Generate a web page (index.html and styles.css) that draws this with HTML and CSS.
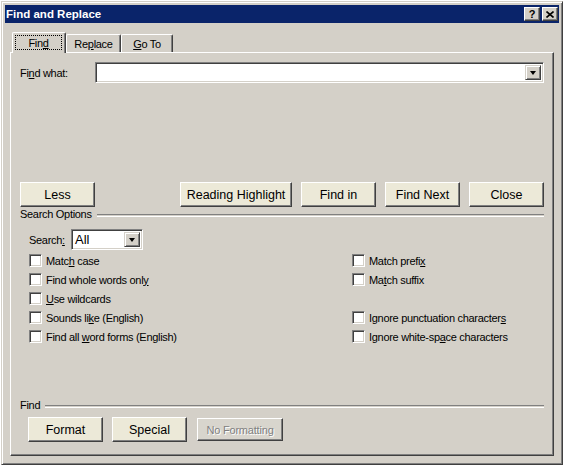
FILE: index.html
```html
<!DOCTYPE html>
<html>
<head>
<meta charset="utf-8">
<link rel="stylesheet" href="styles.css">
</head>
<body>
<div class="window">
  <div class="titlebar">
    <span class="title">Find and Replace</span>
    <div class="tbtns">
      <span class="tbtn help">?</span>
      <span class="tbtn close"><svg width="8" height="7" viewBox="0 0 8 7"><path d="M0.5 0.5 L7.5 6.5 M7.5 0.5 L0.5 6.5" stroke="#000" stroke-width="1.6" fill="none"/></svg></span>
    </div>
  </div>
  <div class="client">
    <div class="tabs">
      <div class="tab active"><span class="focus">Fin<u>d</u></span></div>
      <div class="tab t2">Re<u>p</u>lace</div>
      <div class="tab t3"><u>G</u>o To</div>
    </div>
    <div class="panel">
      <div class="findrow">
        <span class="lbl findlbl">Fi<u>n</u>d what:</span>
        <div class="combo wide">
          <div class="field"></div>
          <div class="dd"><span class="arrow"></span></div>
        </div>
      </div>
      <div class="btnrow">
        <div class="btn">Less</div>
        <div class="btn rh">Reading Highlight</div>
        <div class="btn">Find in</div>
        <div class="btn">Find Next</div>
        <div class="btn">Close</div>
      </div>
      <div class="grouphead first"><span class="lbl">Search Options</span><span class="etch"></span></div>
      <div class="searchrow">
        <span class="lbl searchlbl">Search<u>:</u></span>
        <div class="combo small">
          <div class="field val">All</div>
          <div class="dd"><span class="arrow"></span></div>
        </div>
      </div>
      <div class="opts">
        <div class="chk"><span class="box"></span><span class="lbl">Matc<u>h</u> case</span></div>
        <div class="chk"><span class="box"></span><span class="lbl">Match prefi<u>x</u></span></div>
        <div class="chk"><span class="box"></span><span class="lbl">Find whole words onl<u>y</u></span></div>
        <div class="chk"><span class="box"></span><span class="lbl">Ma<u>t</u>ch suffix</span></div>
        <div class="chk"><span class="box"></span><span class="lbl"><u>U</u>se wildcards</span></div>
        <div class="chk"></div>
        <div class="chk"><span class="box"></span><span class="lbl">Sounds li<u>k</u>e (English)</span></div>
        <div class="chk"><span class="box"></span><span class="lbl">Ignore punctuation character<u>s</u></span></div>
        <div class="chk"><span class="box"></span><span class="lbl">Find all <u>w</u>ord forms (English)</span></div>
        <div class="chk"><span class="box"></span><span class="lbl">Ignore white-sp<u>a</u>ce characters</span></div>
      </div>
      <div class="grouphead second"><span class="lbl">Find</span><span class="etch"></span></div>
      <div class="btnrow2">
        <div class="btn">Format</div>
        <div class="btn sp">Special</div>
        <div class="btn disabled">No Formatting</div>
      </div>
    </div>
  </div>
</div>
</body>
</html>
```

FILE: styles.css
```css
html, body {
  margin: 0;
  background: #fff;
}
body {
  padding: 1px 0 0 1px;
  font-family: "Liberation Sans", Arial, sans-serif;
  font-size: 11px;
  color: #000;
}
u { text-decoration: underline; text-underline-offset: 1px; }

.window {
  width: 562px;
  height: 464px;
  box-sizing: border-box;
  background: #d4d0c8;
  border: 1px solid;
  border-color: #d4d0c8 #404040 #404040 #d4d0c8;
  box-shadow: inset 1px 1px #fff, inset -1px -1px #808080;
  padding: 3px;
  display: flex;
  flex-direction: column;
}

.titlebar {
  height: 18px;
  flex: none;
  background: #0a246a;
  display: flex;
  align-items: center;
  padding-left: 1px;
}
.title {
  color: #fff;
  font-weight: bold;
  font-size: 11.5px;
  flex: 1;
}
.tbtns {
  display: flex;
  gap: 2px;
  margin-right: 1px;
}
.tbtn {
  width: 16px;
  height: 14px;
  box-sizing: border-box;
  background: #d4d0c8;
  border: 1px solid;
  border-color: #fff #404040 #404040 #fff;
  box-shadow: inset -1px -1px #808080;
  display: flex;
  align-items: center;
  justify-content: center;
}
.help {
  font-weight: bold;
  font-size: 11px;
  line-height: 12px;
}
.close svg { display: block; }

.client {
  flex: 1;
  padding: 9px 5px 0 5px;
}

.tabs {
  display: flex;
  align-items: flex-end;
  height: 20px;
  margin-left: 2px;
  position: relative;
  z-index: 1;
}
.tab {
  box-sizing: border-box;
  height: 18px;
  border-top: 1px solid #fff;
  border-left: 1px solid #fff;
  border-right: 1px solid #404040;
  box-shadow: inset -1px 0 #808080;
  border-radius: 2px 2px 0 0;
  display: flex;
  align-items: center;
  justify-content: center;
  letter-spacing: -0.3px;
  background: #d4d0c8;
}
.tab.active {
  width: 54px;
  height: 21px;
  margin-bottom: -1px;
  align-items: flex-start;
  justify-content: flex-start;
  padding: 2px 0 0 2px;
}
.focus {
  width: 47px;
  height: 15px;
  box-sizing: border-box;
  border: 1px dotted #000;
  display: flex;
  align-items: center;
  justify-content: center;
}
.t2 { width: 55px; }
.t3 { width: 52px; }

.panel {
  width: 544px;
  height: 404px;
  box-sizing: border-box;
  border: 1px solid;
  border-color: #fff #404040 #404040 #fff;
  box-shadow: inset -1px -1px #808080;
  padding: 9px 9px 0 9px;
  display: flex;
  flex-direction: column;
}

.lbl { letter-spacing: -0.3px; white-space: nowrap; }

.findrow {
  display: flex;
  align-items: center;
  height: 21px;
}
.findlbl { width: 75px; flex: none; }

.combo {
  box-sizing: border-box;
  height: 21px;
  border: 1px solid;
  border-color: #808080 #fff #fff #808080;
  box-shadow: inset 1px 1px #404040, inset -1px -1px #d4d0c8;
  background: #fff;
  padding: 2px;
  display: flex;
}
.combo.wide { flex: 1; }
.combo.small { width: 72px; }
.field {
  flex: 1;
  background: #fff;
}
.field.val {
  font-size: 13px;
  line-height: 16px;
  padding-left: 1px;
}
.dd {
  width: 16px;
  flex: none;
  box-sizing: border-box;
  background: #d4d0c8;
  border: 1px solid;
  border-color: #d4d0c8 #404040 #404040 #d4d0c8;
  box-shadow: inset 1px 1px #fff, inset -1px -1px #808080;
  display: flex;
  align-items: center;
  justify-content: center;
}
.arrow {
  width: 0;
  height: 0;
  border-left: 3.5px solid transparent;
  border-right: 3.5px solid transparent;
  border-top: 4px solid #000;
  margin-top: 1px;
}

.btn {
  box-sizing: border-box;
  width: 75px;
  height: 25px;
  flex: none;
  background: #ece9d8;
  border: 1px solid;
  border-color: #fff #404040 #404040 #fff;
  box-shadow: inset -1px -1px #808080;
  display: flex;
  align-items: center;
  justify-content: center;
  font-size: 12.5px;
  white-space: nowrap;
}
.btnrow {
  display: flex;
  gap: 9px;
  margin-top: 99px;
}
.btn.rh {
  width: 112px;
  margin-left: auto;
}

.grouphead {
  display: flex;
  height: 13px;
  line-height: 13px;
}
.grouphead.first { margin-top: 1px; }
.grouphead.second { margin-top: 53px; }
.etch {
  flex: 1;
  height: 1px;
  border-top: 1px solid #808080;
  border-bottom: 1px solid #fff;
  margin: 6px 0 0 5px;
}

.searchrow {
  display: flex;
  align-items: center;
  margin: 8px 0 0 9px;
  height: 21px;
}
.searchlbl { width: 42px; flex: none; }

.opts {
  display: grid;
  grid-template-columns: 323px 1fr;
  grid-auto-rows: 19px;
  margin: 1px 0 0 9px;
}
.chk {
  display: flex;
  align-items: center;
  gap: 4px;
}
.box {
  width: 13px;
  height: 13px;
  flex: none;
  box-sizing: border-box;
  background: #fff;
  border: 1px solid;
  border-color: #808080 #fff #fff #808080;
  box-shadow: inset 1px 1px #404040, inset -1px -1px #d4d0c8;
}

.btnrow2 {
  display: flex;
  align-items: center;
  margin: 5px 0 0 8px;
}
.btn.sp { margin-left: 9px; }
.btn.disabled {
  margin-left: 10px;
  width: 86px;
  height: 23px;
  background: #d8d5cd;
  color: #808080;
  text-shadow: 1px 1px #fff;
  font-size: 11px;
  letter-spacing: -0.2px;
}
```
